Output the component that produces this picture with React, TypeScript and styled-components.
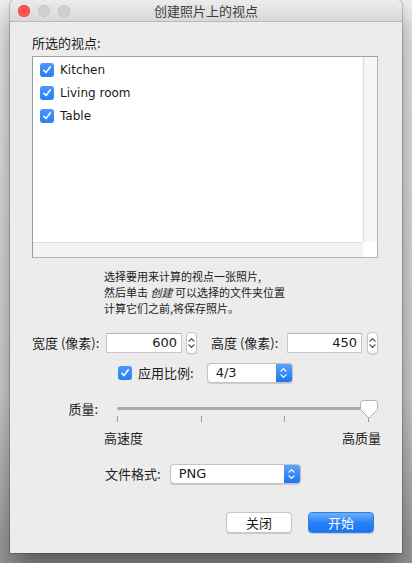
import React from "react";
import styled, { createGlobalStyle } from "styled-components";

const Global = createGlobalStyle`
  html, body { margin: 0; padding: 0; }
  body {
    width: 412px;
    height: 563px;
    overflow: hidden;
    background: linear-gradient(180deg, #f1f1f1 0%, #d6d6d6 70%, #9a9a9a 100%);
    font-family: "DejaVu Sans", "Noto Sans CJK SC", sans-serif;
    color: #1d1d1d;
  }
`;

const Stage = styled.div`
  padding: 0 10px;
`;

const Window = styled.div`
  width: 392px;
  height: 553px;
  background: #ececec;
  border-radius: 5px 5px 0 0;
  box-shadow: 0 14px 28px rgba(0, 0, 0, 0.45), 0 0 0 1px rgba(0, 0, 0, 0.18);
  display: flex;
  flex-direction: column;
  overflow: hidden;
`;

const TitleBar = styled.div`
  height: 21px;
  border-bottom: 1px solid #b9b9b9;
  background: linear-gradient(180deg, #ececec 0%, #d8d8d8 100%);
  display: grid;
  grid-template-columns: 1fr auto 1fr;
  align-items: center;
  border-radius: 5px 5px 0 0;
`;

const Lights = styled.div`
  display: flex;
  gap: 8px;
  padding-left: 8px;
`;

const Light = styled.span<{ $color: string; $border: string }>`
  width: 12px;
  height: 12px;
  border-radius: 50%;
  background: ${(p) => p.$color};
  box-shadow: inset 0 0 0 0.5px ${(p) => p.$border};
`;

const Title = styled.div`
  font-family: "Noto Sans CJK SC", sans-serif;
  font-size: 13px;
  line-height: 16px;
  color: #3c3c3c;
`;

const Content = styled.div`
  padding: 12px 24px 0 22px;
  display: flex;
  flex-direction: column;
`;

const Label = styled.div`
  font-size: 13px;
  line-height: 18px;
  font-family: "Noto Sans CJK SC", sans-serif;
  white-space: nowrap;
  color: #1e1e1e;
`;

const ListBox = styled.div`
  margin-top: 4px;
  width: 346px;
  height: 202px;
  box-sizing: border-box;
  border: 1px solid #b4b4b4;
  border-top-color: #a2a2a2;
  border-left-color: #9c9c9c;
  display: grid;
  grid-template-columns: 1fr 14px;
  grid-template-rows: 1fr 15px;
  background: #fff;
`;

const ListItems = styled.div`
  padding: 6px 0 0 7px;
  display: flex;
  flex-direction: column;
  gap: 9px;
`;

const ListRow = styled.div`
  display: flex;
  align-items: center;
  gap: 6px;
  height: 14px;
  font-size: 12px;
  color: #1a1a1a;
`;

const CheckBox = styled.span`
  width: 14px;
  height: 14px;
  border-radius: 3px;
  background: linear-gradient(180deg, #4b97fb 0%, #2a7ef4 100%);
  display: inline-flex;
  align-items: center;
  justify-content: center;
  flex: none;
`;

const VScroll = styled.div`
  background: linear-gradient(90deg, #e9e9e9 0px, #f7f7f7 1px, #f7f7f7 9px, #f0f5fb 10px, #fafafa 14px);
  border-left: 1px solid #dcdcdc;
`;

const HScroll = styled.div`
  background: linear-gradient(180deg, #f4f4f4 0%, #f4f4f4 70%, #eef3f9 100%);
  border-top: 1px solid #dcdcdc;
`;

const Corner = styled.div`
  background: #fff;
`;

const Help = styled.div`
  margin: 10px 0 0 72px;
  font-family: "Noto Sans CJK SC", sans-serif;
  font-size: 11px;
  line-height: 16px;
  color: #222;
  em {
    font-style: italic;
  }
`;

const SizeRow = styled.div`
  margin-top: 16px;
  height: 22px;
  display: flex;
  align-items: center;
`;

const NumField = styled.div<{ $w: number }>`
  width: ${(p) => p.$w}px;
  height: 20px;
  box-sizing: border-box;
  background: #fff;
  border: 1px solid #c9c9c9;
  border-top-color: #b5b5b5;
  font-size: 13px;
  line-height: 18px;
  text-align: right;
  padding-right: 4px;
  color: #1a1a1a;
`;

const Stepper = styled.div`
  width: 11px;
  height: 22px;
  box-sizing: border-box;
  border: 1px solid #c6c6c6;
  border-radius: 4px;
  background: #fff;
  display: flex;
  align-items: center;
  justify-content: center;
  box-shadow: 0 0.5px 1px rgba(0, 0, 0, 0.12);
`;

const RatioRow = styled.div`
  margin: 9px 0 0 86px;
  height: 20px;
  display: flex;
  align-items: center;
`;

const Popup = styled.div<{ $w: number }>`
  width: ${(p) => p.$w}px;
  height: 20px;
  box-sizing: border-box;
  border: 1px solid #c4c4c4;
  border-radius: 4px;
  background: #fff;
  display: flex;
  overflow: hidden;
  box-shadow: 0 0.5px 1px rgba(0, 0, 0, 0.15);
`;

const PopupText = styled.div`
  flex: 1;
  font-size: 13px;
  line-height: 18px;
  padding-left: 8px;
  color: #1a1a1a;
`;

const PopupArrow = styled.div`
  width: 16px;
  background: linear-gradient(180deg, #5aa4fb 0%, #1c74f0 100%);
  display: flex;
  align-items: center;
  justify-content: center;
`;

const QualityGrid = styled.div`
  margin-top: 16px;
  display: grid;
  grid-template-columns: 76px 270px;
  grid-template-rows: 24px 16px;
  row-gap: 7px;
`;

const QualityLabel = styled(Label)`
  text-align: right;
  padding-right: 10px;
  line-height: 18px;
  padding-top: 1px;
`;

const SliderBox = styled.div`
  position: relative;
  padding: 0 9px;
  display: flex;
  flex-direction: column;
`;

const Track = styled.div`
  margin-top: 8px;
  height: 3px;
  border-radius: 2px;
  background: #a9a9a9;
`;

const Ticks = styled.div`
  margin-top: 6px;
  display: flex;
  justify-content: space-between;
`;

const Tick = styled.span`
  width: 1px;
  height: 6px;
  background: #9a9a9a;
`;

const Thumb = styled.svg`
  position: absolute;
  top: 1px;
  margin-left: -9px;
`;

const ScaleLabels = styled.div`
  grid-column: 2;
  margin: 0 -3px 0 -4px;
  display: flex;
  justify-content: space-between;
  font-family: "Noto Sans CJK SC", sans-serif;
  font-size: 13px;
  line-height: 16px;
`;

const FormatRow = styled.div`
  margin: 17px 0 0 73px;
  height: 21px;
  display: flex;
  align-items: center;
  gap: 9px;
`;

const ButtonRow = styled.div`
  margin-top: 28px;
  display: flex;
  justify-content: flex-end;
  gap: 16px;
  padding-right: 4px;
`;

const Button = styled.div<{ $primary?: boolean }>`
  width: 66px;
  height: 21px;
  box-sizing: border-box;
  border-radius: 4px;
  font-family: "Noto Sans CJK SC", sans-serif;
  font-size: 13px;
  line-height: 19px;
  text-align: center;
  color: ${(p) => (p.$primary ? "#fff" : "#1a1a1a")};
  background: ${(p) =>
    p.$primary ? "linear-gradient(180deg, #6cb2fb 0%, #2a82f7 50%, #1776f4 100%)" : "#fff"};
  border: 1px solid ${(p) => (p.$primary ? "#2f7fe8" : "#c6c6c6")};
  box-shadow: 0 0.5px 1px rgba(0, 0, 0, 0.15);
`;

const Spacer = styled.span<{ $w: number }>`
  flex: none;
  width: ${(p) => p.$w}px;
`;

const Check = () => (
  <svg width="10" height="10" viewBox="0 0 10 10">
    <path d="M1.8 5.2 L4 7.6 L8.3 1.8" fill="none" stroke="#fff" strokeWidth="1.5" strokeLinecap="round" strokeLinejoin="round" />
  </svg>
);

const UpDown = ({ color }: { color: string }) => (
  <svg width="7" height="12" viewBox="0 0 7 12">
    <path d="M1 4.2 L3.5 1.6 L6 4.2 M1 7.8 L3.5 10.4 L6 7.8" fill="none" stroke={color} strokeWidth="1.2" strokeLinecap="round" strokeLinejoin="round" />
  </svg>
);

const rooms = ["Kitchen", "Living room", "Table"];

export default function App() {
  const quality = 100;
  return (
    <Stage>
      <Global />
      <Window>
        <TitleBar>
          <Lights>
            <Light $color="#fc5753" $border="#df3d39" />
            <Light $color="#d0d0d0" $border="#bdbdbd" />
            <Light $color="#d0d0d0" $border="#bdbdbd" />
          </Lights>
          <Title>创建照片上的视点</Title>
          <span />
        </TitleBar>
        <Content>
          <Label>所选的视点:</Label>
          <ListBox>
            <ListItems>
              {rooms.map((r) => (
                <ListRow key={r}>
                  <CheckBox>
                    <Check />
                  </CheckBox>
                  {r}
                </ListRow>
              ))}
            </ListItems>
            <VScroll />
            <HScroll />
            <Corner />
          </ListBox>
          <Help>
            选择要用来计算的视点一张照片,
            <br />
            然后单击 <em>创建</em> 可以选择的文件夹位置
            <br />
            计算它们之前,将保存照片。
          </Help>
          <SizeRow>
            <Label>宽度 (像素):</Label>
            <Spacer $w={7} />
            <NumField $w={76}>600</NumField>
            <Spacer $w={4} />
            <Stepper>
              <UpDown color="#444" />
            </Stepper>
            <Spacer $w={14} />
            <Label>高度 (像素):</Label>
            <Spacer $w={9} />
            <NumField $w={75}>450</NumField>
            <Spacer $w={5} />
            <Stepper>
              <UpDown color="#444" />
            </Stepper>
          </SizeRow>
          <RatioRow>
            <CheckBox>
              <Check />
            </CheckBox>
            <Spacer $w={6} />
            <Label>应用比例:</Label>
            <Spacer $w={13} />
            <Popup $w={86}>
              <PopupText>4/3</PopupText>
              <PopupArrow>
                <UpDown color="#fff" />
              </PopupArrow>
            </Popup>
          </RatioRow>
          <QualityGrid>
            <QualityLabel>质量:</QualityLabel>
            <SliderBox>
              <Track />
              <Ticks>
                <Tick />
                <Tick />
                <Tick />
                <Tick />
              </Ticks>
              <Thumb
                width="18"
                height="19"
                viewBox="0 0 18 19"
                style={{ left: `calc(9px + (100% - 18px) * ${quality / 100})` }}
              >
                <path
                  d="M3.5 0.5 H14.5 Q17.5 0.5 17.5 3.5 V9.5 L9 18 L0.5 9.5 V3.5 Q0.5 0.5 3.5 0.5 Z"
                  fill="#fff"
                  stroke="#b0b0b0"
                />
              </Thumb>
            </SliderBox>
            <ScaleLabels>
              <span>高速度</span>
              <span>高质量</span>
            </ScaleLabels>
          </QualityGrid>
          <FormatRow>
            <Label>文件格式:</Label>
            <Popup $w={131}>
              <PopupText>PNG</PopupText>
              <PopupArrow>
                <UpDown color="#fff" />
              </PopupArrow>
            </Popup>
          </FormatRow>
          <ButtonRow>
            <Button>关闭</Button>
            <Button $primary>开始</Button>
          </ButtonRow>
        </Content>
      </Window>
    </Stage>
  );
}
